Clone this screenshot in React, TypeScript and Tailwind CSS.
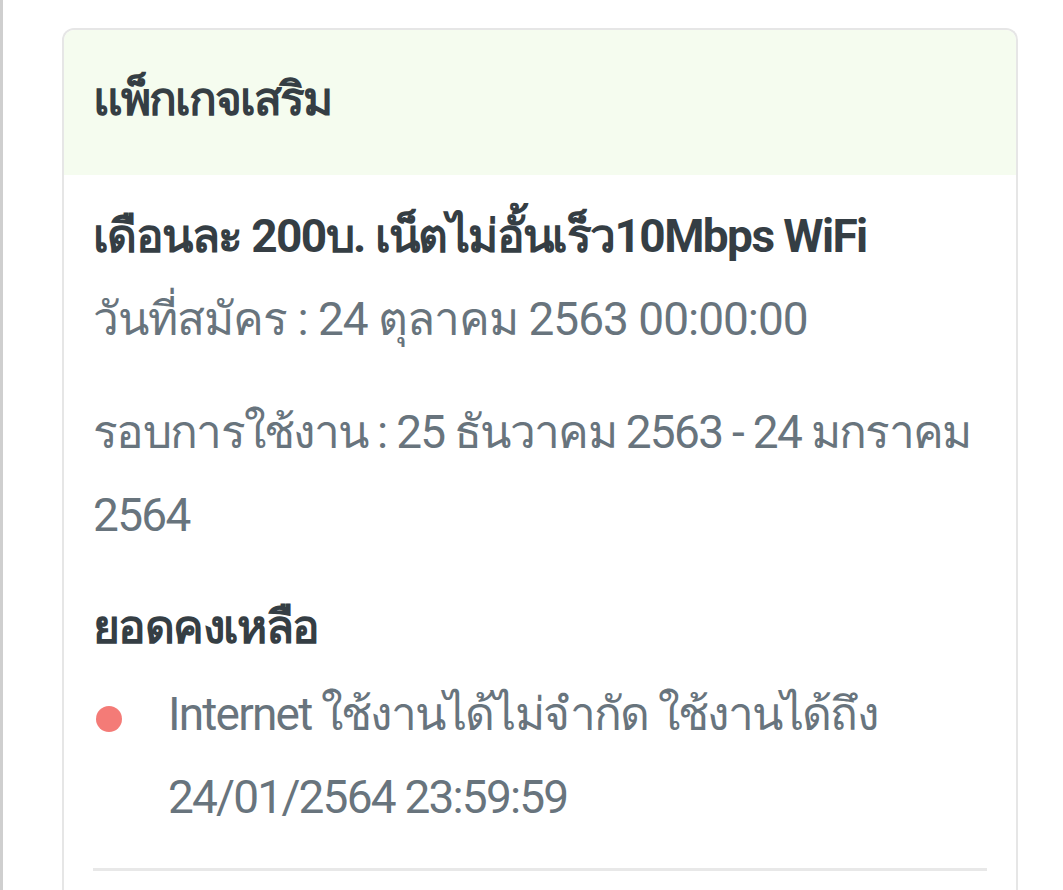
export default function App() {
  return (
    <div
      className="min-h-[890px] overflow-hidden border-l-[3px] border-[#cfcfcf] bg-white pl-[59px] pr-[45px] pt-[28px]"
      style={{ fontFamily: 'Roboto, "Noto Sans", sans-serif' }}
    >
      <div className="min-h-[900px] rounded-t-[12px] border-2 border-b-0 border-[#e6e6e6]">
        {/* Header */}
        <div className="flex h-[145px] items-center rounded-t-[10px] bg-[#f5fcef] px-[29px] pb-[6px]">
          <h2 className="text-[46px] font-bold tracking-[-2px] text-[#353e44]">แพ็กเกจเสริม</h2>
        </div>

        {/* Body */}
        <div className="px-[29px] pt-[20px] text-[46px] leading-[83px] tracking-[-1px] text-[#68747d]">
          <p className="font-bold tracking-[-1.6px] text-[#353e44]">
            เดือนละ 200บ. เน็ตไม่อั้นเร็ว10Mbps WiFi
          </p>
          <p>วันที่สมัคร : 24 ตุลาคม 2563 00:00:00</p>
          <p className="mt-[30px] tracking-[-1.7px]">
            รอบการใช้งาน : 25 ธันวาคม 2563 - 24 มกราคม 2564
          </p>
          <p className="mt-[29px] font-bold tracking-[-1.6px] text-[#353e44]">ยอดคงเหลือ</p>
          <ul className="mt-[4px]">
            <li className="flex items-start">
              <span className="flex h-[83px] w-[75px] shrink-0 items-center">
                <span className="mt-[8px] ml-[3px] h-[26px] w-[26px] rounded-full bg-[#f47b77]" />
              </span>
              <span className="tracking-[-1.8px]">
                Internet ใช้งานได้ไม่จำกัด ใช้งานได้ถึง 24/01/2564 23:59:59
              </span>
            </li>
          </ul>
          <div className="mt-[29px] h-[3px] bg-[#e8e8e8]" />
        </div>
      </div>
    </div>
  );
}
